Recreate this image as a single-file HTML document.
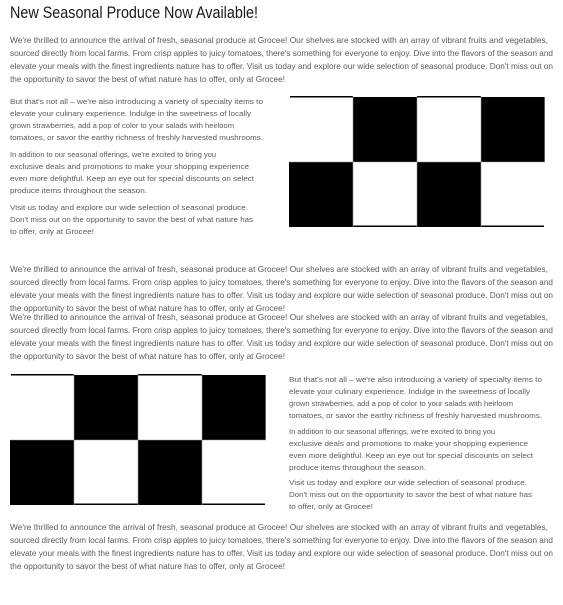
<html><head><style>
body{margin:0;width:563px;height:605px;background:#fff;overflow:hidden}
svg{display:block}
text{font-family:"Liberation Sans",sans-serif;fill:#5a5a5a}
.m{font-size:8.4px}
.s{font-size:7.2px}
.h{font-size:17px;fill:#1a1a1a}
</style></head><body>
<svg width="563" height="605" viewBox="0 0 563 605">
<defs>
<g id="cb">
<rect x="0" y="0" width="256" height="131" fill="#fff"/>
<rect x="64" y="1" width="64" height="65" fill="#000"/>
<rect x="192" y="1" width="64" height="65" fill="#000"/>
<rect x="0" y="66" width="64" height="65" fill="#000"/>
<rect x="128" y="66" width="64" height="65" fill="#000"/>
<rect x="1" y="0" width="63" height="1.5" fill="#000"/>
<rect x="128" y="0" width="64" height="1.5" fill="#000"/>
<rect x="64" y="129.5" width="64" height="1.5" fill="#000"/>
<rect x="192" y="129.5" width="63" height="1.5" fill="#000"/>
<path d="M64 0V131M128 0V131M192 0V131M0 66H256M255.5 1V66" stroke="#999" stroke-width="0.6"/>
</g>
</defs>
<text class="h" x="10" y="18" textLength="248" lengthAdjust="spacingAndGlyphs">New Seasonal Produce Now Available!</text>

<g class="m">
<text x="10" y="43" textLength="538" lengthAdjust="spacingAndGlyphs">We're thrilled to announce the arrival of fresh, seasonal produce at Grocee! Our shelves are stocked with an array of vibrant fruits and vegetables,</text>
<text x="10" y="56" textLength="543" lengthAdjust="spacingAndGlyphs">sourced directly from local farms. From crisp apples to juicy tomatoes, there's something for everyone to enjoy. Dive into the flavors of the season and</text>
<text x="10" y="69" textLength="543" lengthAdjust="spacingAndGlyphs">elevate your meals with the finest ingredients nature has to offer. Visit us today and explore our wide selection of seasonal produce. Don't miss out on</text>
<text x="10" y="82" textLength="275" lengthAdjust="spacingAndGlyphs">the opportunity to savor the best of what nature has to offer, only at Grocee!</text>
</g>

<g class="s">
<text x="10" y="104" textLength="253" lengthAdjust="spacingAndGlyphs">But that's not all – we're also introducing a variety of specialty items to</text>
<text x="10" y="116" textLength="241" lengthAdjust="spacingAndGlyphs">elevate your culinary experience. Indulge in the sweetness of locally</text>
<text x="10" y="128" textLength="224" lengthAdjust="spacingAndGlyphs">grown strawberries, add a pop of color to your salads with heirloom</text>
<text x="10" y="140" textLength="253" lengthAdjust="spacingAndGlyphs">tomatoes, or savor the earthy richness of freshly harvested mushrooms.</text>
<text x="10" y="157" textLength="206" lengthAdjust="spacingAndGlyphs">In addition to our seasonal offerings, we're excited to bring you</text>
<text x="10" y="169" textLength="239" lengthAdjust="spacingAndGlyphs">exclusive deals and promotions to make your shopping experience</text>
<text x="10" y="181" textLength="244" lengthAdjust="spacingAndGlyphs">even more delightful. Keep an eye out for special discounts on select</text>
<text x="10" y="193" textLength="137" lengthAdjust="spacingAndGlyphs">produce items throughout the season.</text>
<text x="10" y="210" textLength="238" lengthAdjust="spacingAndGlyphs">Visit us today and explore our wide selection of seasonal produce.</text>
<text x="10" y="222" textLength="243" lengthAdjust="spacingAndGlyphs">Don't miss out on the opportunity to savor the best of what nature has</text>
<text x="10" y="234" textLength="84" lengthAdjust="spacingAndGlyphs">to offer, only at Grocee!</text>
</g>

<use href="#cb" x="289" y="96"/>

<g class="m">
<text x="10" y="272" textLength="538" lengthAdjust="spacingAndGlyphs">We're thrilled to announce the arrival of fresh, seasonal produce at Grocee! Our shelves are stocked with an array of vibrant fruits and vegetables,</text>
<text x="10" y="285" textLength="543" lengthAdjust="spacingAndGlyphs">sourced directly from local farms. From crisp apples to juicy tomatoes, there's something for everyone to enjoy. Dive into the flavors of the season and</text>
<text x="10" y="298" textLength="543" lengthAdjust="spacingAndGlyphs">elevate your meals with the finest ingredients nature has to offer. Visit us today and explore our wide selection of seasonal produce. Don't miss out on</text>
<text x="10" y="311" textLength="275" lengthAdjust="spacingAndGlyphs">the opportunity to savor the best of what nature has to offer, only at Grocee!</text>
<text x="10" y="320" textLength="538" lengthAdjust="spacingAndGlyphs">We're thrilled to announce the arrival of fresh, seasonal produce at Grocee! Our shelves are stocked with an array of vibrant fruits and vegetables,</text>
<text x="10" y="333" textLength="543" lengthAdjust="spacingAndGlyphs">sourced directly from local farms. From crisp apples to juicy tomatoes, there's something for everyone to enjoy. Dive into the flavors of the season and</text>
<text x="10" y="346" textLength="543" lengthAdjust="spacingAndGlyphs">elevate your meals with the finest ingredients nature has to offer. Visit us today and explore our wide selection of seasonal produce. Don't miss out on</text>
<text x="10" y="359" textLength="275" lengthAdjust="spacingAndGlyphs">the opportunity to savor the best of what nature has to offer, only at Grocee!</text>
</g>

<use href="#cb" x="10" y="374"/>

<g class="s">
<text x="289" y="382" textLength="253" lengthAdjust="spacingAndGlyphs">But that's not all – we're also introducing a variety of specialty items to</text>
<text x="289" y="394" textLength="241" lengthAdjust="spacingAndGlyphs">elevate your culinary experience. Indulge in the sweetness of locally</text>
<text x="289" y="406" textLength="224" lengthAdjust="spacingAndGlyphs">grown strawberries, add a pop of color to your salads with heirloom</text>
<text x="289" y="418" textLength="253" lengthAdjust="spacingAndGlyphs">tomatoes, or savor the earthy richness of freshly harvested mushrooms.</text>
<text x="289" y="434" textLength="206" lengthAdjust="spacingAndGlyphs">In addition to our seasonal offerings, we're excited to bring you</text>
<text x="289" y="446" textLength="239" lengthAdjust="spacingAndGlyphs">exclusive deals and promotions to make your shopping experience</text>
<text x="289" y="458" textLength="244" lengthAdjust="spacingAndGlyphs">even more delightful. Keep an eye out for special discounts on select</text>
<text x="289" y="470" textLength="137" lengthAdjust="spacingAndGlyphs">produce items throughout the season.</text>
<text x="289" y="485" textLength="238" lengthAdjust="spacingAndGlyphs">Visit us today and explore our wide selection of seasonal produce.</text>
<text x="289" y="497" textLength="243" lengthAdjust="spacingAndGlyphs">Don't miss out on the opportunity to savor the best of what nature has</text>
<text x="289" y="509" textLength="84" lengthAdjust="spacingAndGlyphs">to offer, only at Grocee!</text>
</g>

<g class="m">
<text x="10" y="530" textLength="538" lengthAdjust="spacingAndGlyphs">We're thrilled to announce the arrival of fresh, seasonal produce at Grocee! Our shelves are stocked with an array of vibrant fruits and vegetables,</text>
<text x="10" y="543" textLength="543" lengthAdjust="spacingAndGlyphs">sourced directly from local farms. From crisp apples to juicy tomatoes, there's something for everyone to enjoy. Dive into the flavors of the season and</text>
<text x="10" y="556" textLength="543" lengthAdjust="spacingAndGlyphs">elevate your meals with the finest ingredients nature has to offer. Visit us today and explore our wide selection of seasonal produce. Don't miss out on</text>
<text x="10" y="569" textLength="275" lengthAdjust="spacingAndGlyphs">the opportunity to savor the best of what nature has to offer, only at Grocee!</text>
</g>
</svg>
</body></html>
